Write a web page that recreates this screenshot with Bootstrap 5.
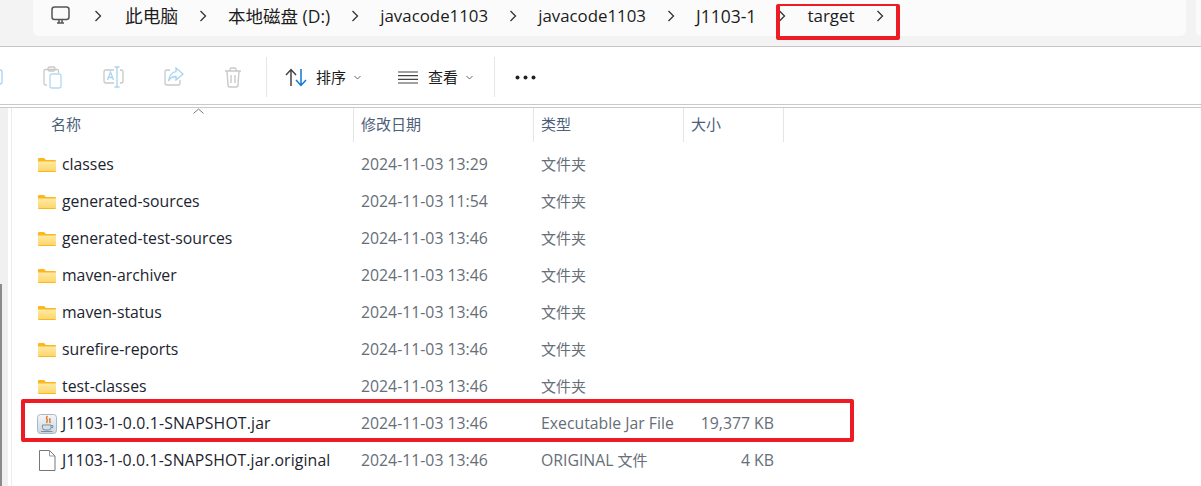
<!doctype html>
<html lang="zh"><head><meta charset="utf-8"><title>target</title>
<link href="https://cdn.jsdelivr.net/npm/bootstrap@5.3.0/dist/css/bootstrap.min.css" rel="stylesheet">
<style>
html,body{height:486px;overflow:hidden;background:#fff}
body{font-family:"Open Sans","Noto Sans CJK SC",sans-serif;font-size:15.8px;color:#1a1a1a;position:relative}
.addr-bar{height:47px;background:#f3f3f3;border-bottom:1px solid #c6c4c6;padding-left:33px;gap:10px;overflow:hidden}
.addr-pill{height:36px;flex:1 1 auto;background:#fbfbfb;border-bottom-left-radius:6px;border-bottom-right-radius:6px;padding:0 0 4px 18px;gap:21px;font-size:17.5px;color:#1c1c1c;white-space:nowrap}
.addr-search{height:36px;width:5px;flex:none;background:#fbfbfb;border-bottom-left-radius:6px}
.crumb-zh{font-size:17.7px}
.crumb-en{font-size:16.85px}
.crumb-tg{font-size:17px}
.chev-a{margin-right:2px}
.chev-b{margin-left:1px}
.tool-bar{height:58px;border-bottom:1px solid #c9c9c9;padding-top:3px}
.t-sep{width:1px;height:40px;background:#e6e6e6;flex:none}
.t-sep-a{margin:0 18px 0 24px}
.t-sep-b{margin:0 20px 0 21px}
.t-lbl{font-size:15px;line-height:20px;color:#1c1c1c;white-space:nowrap}
.t-lbl-a{margin-left:9px}
.t-lbl-b{margin-left:10px}
.t-view{margin-left:37px}
.t-group{gap:40px}
.side-strip{position:absolute;left:0;top:108px;width:8px;bottom:0;background:#f0f0f0}
.side-line{position:absolute;left:11px;top:108px;width:1px;bottom:0;background:#ececec}
.side-thumb{position:absolute;left:0;top:284px;width:2px;height:202px;background:#8b8b8b}
.list-wrap{margin-top:2px;border-top:1px solid #c9c9c9}
.head-row{display:grid;grid-template-columns:354px 180px 150px 100px;height:34px;font-size:15px;color:#4c607a}
.head-cell{line-height:33px;padding-left:7px;border-right:1px solid #e5e5e5}
.head-cell.first{padding-left:51px}
.sort-up{position:absolute;left:193px;top:108px}
.row-list{padding-top:4px}
.file-row{display:grid;grid-template-columns:354px 180px 150px 100px;height:37px;align-items:center}
.f-name{display:flex;align-items:center;padding-left:38px;gap:6px;color:#1c2430;white-space:nowrap}
.f-name.jar{padding-left:37px;gap:4px;letter-spacing:.15px}
.f-name.orig{letter-spacing:.13px}
.f-ic{width:18px;flex:none;display:block}
.f-date,.f-type{padding-left:7px;color:#666e78;white-space:nowrap}
.zh{font-size:15px}
.f-size{text-align:right;padding-right:10px;color:#666e78;white-space:nowrap}
.mark-box{position:absolute;border:4px solid #ed1c24;border-radius:2px;pointer-events:none}
.mark-top{left:776px;top:4px;width:124px;height:36px;border-top-width:2px}
.mark-jar{left:21px;top:399px;width:833px;height:43px}
</style></head><body>
<svg width="0" height="0" class="position-absolute"><defs>
<linearGradient id="fg" x1="0" y1="0" x2="0" y2="1"><stop offset="0" stop-color="#ffe9a6"/><stop offset="1" stop-color="#fdd76c"/></linearGradient>
<linearGradient id="jg" x1="0" y1="0" x2="0" y2="1"><stop offset="0" stop-color="#f4f7fa"/><stop offset="1" stop-color="#c9d6e2"/></linearGradient>
<symbol id="ifolder" viewBox="0 0 18 14"><path d="M0 1a1 1 0 0 1 1-1h5l2 2h9a1 1 0 0 1 1 1v10a1 1 0 0 1-1 1H1a1 1 0 0 1-1-1z" fill="#fbb81e"/><path d="M0 3.500h18v9.500H0z" fill="url(#fg)"/></symbol>
<symbol id="ichev" viewBox="0 0 8 12"><path d="M1.500 1l5 5-5 5" fill="none" stroke="#333" stroke-width="1.300"/></symbol>
</defs></svg>

<header class="addr-bar d-flex">
  <nav class="addr-pill d-flex align-items-center">
    <svg width="22" height="22" viewBox="0 0 22 22" fill="none" stroke="#555"><rect x="1" y="2" width="17" height="12.500" rx="2.500" stroke-width="1.500"/><path d="M6 18h7M8 15v3M11 15v3" stroke-width="1.500"/></svg>
    <svg class="chev-a" width="8" height="12"><use href="#ichev"/></svg><span class="crumb-zh">此电脑</span>
    <svg width="8" height="12"><use href="#ichev"/></svg><span>本地磁盘 (D:)</span>
    <svg width="8" height="12"><use href="#ichev"/></svg><span class="crumb-en">javacode1103</span>
    <svg width="8" height="12"><use href="#ichev"/></svg><span class="crumb-en">javacode1103</span>
    <svg width="8" height="12"><use href="#ichev"/></svg><span>J1103-1</span>
    <svg class="chev-b" width="8" height="12"><use href="#ichev"/></svg><span class="crumb-tg">target</span>
    <svg width="8" height="12"><use href="#ichev"/></svg>
  </nav>
  <div class="addr-search"></div>
</header>

<div class="tool-bar d-flex align-items-center">
  <div class="t-group d-flex align-items-center">
    <svg width="3" height="16" viewBox="0 0 3 16" fill="none" stroke="#a9d3f2" stroke-width="1.300"><path d="M-4 1h4a2 2 0 0 1 2 2v10a2 2 0 0 1-2 2h-4"/></svg>
    <svg width="20" height="23" viewBox="0 0 20 23" fill="none" stroke-width="1.300"><path d="M4 19H2.500A1.500 1.500 0 0 1 1 17.500V5A1.500 1.500 0 0 1 2.500 3.500H14A1.500 1.500 0 0 1 15.500 5V7" stroke="#c9c9c9"/><rect x="5" y="1" width="7" height="4" rx="1.500" stroke="#c9c9c9"/><rect x="7" y="8" width="11" height="14" rx="2" stroke="#b5d8f3"/></svg>
    <svg width="21" height="22" viewBox="0 0 21 22" fill="none" stroke-width="1.300"><path d="M11 4H3a2 2 0 0 0-2 2v9a2 2 0 0 0 2 2h8M17 4h1a2 2 0 0 1 2 2v9a2 2 0 0 1-2 2h-1" stroke="#c9c9c9"/><path d="M14 1v20M11.500 1h5M11.500 21h5" stroke="#a9d3f2"/><path d="M4.500 14l3-8 3 8M5.500 11.500h4" stroke="#a9d3f2"/></svg>
    <svg width="20" height="20" viewBox="0 0 20 20" fill="none" stroke-width="1.300"><path d="M6 3H3a2 2 0 0 0-2 2v11a2 2 0 0 0 2 2h11a2 2 0 0 0 2-2v-3" stroke="#c9c9c9"/><path d="M12 1l7 6-7 6V9.500C8 9.500 6 11 4.500 14 5 9 8 5 12 4.700z" stroke="#a9d3f2"/></svg>
    <svg width="18" height="21" viewBox="0 0 18 21" fill="none" stroke="#c9c9c9" stroke-width="1.400"><path d="M1 4h16M6 4V2.500A1.500 1.500 0 0 1 7.500 1h3A1.500 1.500 0 0 1 12 2.500V4M3 4l1 14a2 2 0 0 0 2 2h6a2 2 0 0 0 2-2l1-14M7 8v8M11 8v8"/></svg>
  </div>
  <span class="t-sep t-sep-a"></span>
  <svg width="22" height="19" viewBox="0 0 22 19" fill="none" stroke-width="1.500"><path d="M1 7l5-5.500L11 7M6 2v16" stroke="#444"/><path d="M11 12l5 5.500 5-5.500M16 17V1" stroke="#0f78d4"/></svg>
  <span class="t-lbl t-lbl-a">排序</span>
  <svg class="ms-2" width="7" height="5" viewBox="0 0 7 5" fill="none" stroke="#666"><path d="M.5 1l3 3 3-3"/></svg>
  <svg class="t-view" width="20" height="13" viewBox="0 0 20 13" fill="none" stroke="#444" stroke-width="1.200"><path d="M0 1h20M0 4.700h20M0 8.300h20M0 12h20"/></svg>
  <span class="t-lbl t-lbl-b">查看</span>
  <svg class="ms-2" width="7" height="5" viewBox="0 0 7 5" fill="none" stroke="#666"><path d="M.5 1l3 3 3-3"/></svg>
  <span class="t-sep t-sep-b"></span>
  <svg width="21" height="5" viewBox="0 0 21 5" fill="#222"><circle cx="2.500" cy="2.500" r="2"/><circle cx="10.500" cy="2.500" r="2"/><circle cx="18.500" cy="2.500" r="2"/></svg>
</div>

<div class="side-strip"></div><div class="side-line"></div><div class="side-thumb"></div>
<svg class="sort-up" width="11" height="6" viewBox="0 0 11 6" fill="none" stroke="#777"><path d="M.5 5.500l5-4.500 5 4.500"/></svg>

<main class="list-wrap">
<div class="head-row"><div class="head-cell first">名称</div><div class="head-cell">修改日期</div><div class="head-cell">类型</div><div class="head-cell">大小</div></div>
<section id="rows" class="row-list"></section>
</main>
<div class="mark-box mark-top"></div>
<div class="mark-box mark-jar"></div>
<script>
const rows=[['classes','2024-11-03 13:29'],['generated-sources','2024-11-03 11:54'],['generated-test-sources','2024-11-03 13:46'],['maven-archiver','2024-11-03 13:46'],['maven-status','2024-11-03 13:46'],['surefire-reports','2024-11-03 13:46'],['test-classes','2024-11-03 13:46']];
let h=rows.map(r=>`<div class="file-row"><div class="f-name"><svg class="f-ic" height="14"><use href="#ifolder"/></svg>${r[0]}</div><div class="f-date">${r[1]}</div><div class="f-type"><span class="zh">文件夹</span></div><div></div></div>`).join('');
h+=`<div class="file-row"><div class="f-name jar"><svg width="21" height="20" viewBox="0 0 21 20" class="flex-shrink-0"><rect x=".5" y=".5" width="19" height="19" rx="3" fill="url(#jg)" stroke="#a9b8c6"/><path d="M10.500 2c-3.200 2.500 1.800 3.500-1 7M13.500 4.500c-2.600 1.500 1 2.400-1 4.500" stroke="#e2762a" stroke-width="1.500" fill="none"/><path d="M5.500 11h8.500v2.500A2.500 2.500 0 0 1 11.500 16H8a2.500 2.500 0 0 1-2.500-2.500zM14 11.500h1.800v2H14M4 17.500h11.500" stroke="#7c8d9c" fill="none"/></svg>J1103-1-0.0.1-SNAPSHOT.jar</div><div class="f-date">2024-11-03 13:46</div><div class="f-type">Executable Jar File</div><div class="f-size">19,377 KB</div></div>`;
h+=`<div class="file-row"><div class="f-name orig"><svg class="f-ic" height="21" viewBox="0 0 18 21"><path d="M1.500 .5h10l5.500 5.500v14.500H1.500z" fill="#fff" stroke="#777"/><path d="M11.500 .5V6H17" fill="none" stroke="#999"/></svg>J1103-1-0.0.1-SNAPSHOT.jar.original</div><div class="f-date">2024-11-03 13:46</div><div class="f-type">ORIGINAL <span class="zh">文件</span></div><div class="f-size">4 KB</div></div>`;
document.getElementById('rows').innerHTML=h;
</script>
<script src="https://cdn.jsdelivr.net/npm/bootstrap@5.3.0/dist/js/bootstrap.bundle.min.js"></script>
</body></html>
